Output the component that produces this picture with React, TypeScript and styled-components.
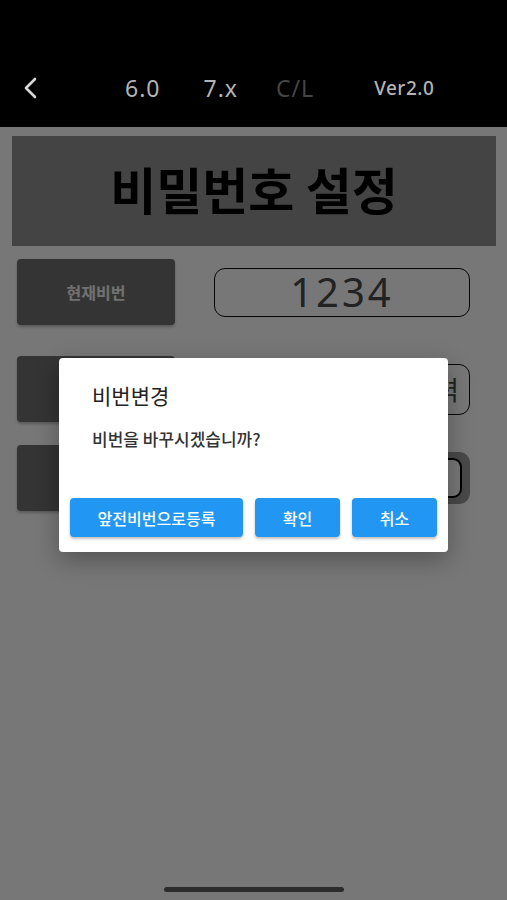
import React from "react";
import styled, { createGlobalStyle } from "styled-components";

const GlobalStyle = createGlobalStyle`
  html, body {
    margin: 0;
    padding: 0;
    background: #000;
  }
  * {
    box-sizing: border-box;
  }
`;

const FONT = `"Noto Sans", "Noto Sans CJK KR", sans-serif`;

const Screen = styled.div`
  position: relative;
  width: 507px;
  height: 900px;
  overflow: hidden;
  background-color: #ffffff;
  font-family: ${FONT};
  display: flex;
  flex-direction: column;
`;

const Header = styled.div`
  height: 127px;
  flex-shrink: 0;
  background-color: #000;
  display: flex;
  align-items: center;
  padding: 49px 0 0 22px;
`;

const BackButton = styled.div`
  width: 18px;
  height: 22px;
  display: flex;
  align-items: center;
`;

type TabProps = {
  $dim?: boolean;
  $small?: boolean;
  $gap: number;
};

const Tab = styled.span<TabProps>`
  font-size: ${({ $small }) => ($small ? 19 : 23)}px;
  font-weight: ${({ $small }) => ($small ? 500 : 400)};
  letter-spacing: ${({ $small }) => ($small ? 0.5 : 1)}px;
  color: ${({ $dim }) => ($dim ? "#454545" : "#b4b4b4")};
  margin-left: ${({ $gap }) => $gap}px;
  line-height: 1;
`;

const Body = styled.div`
  flex: 1;
  padding: 9px 11px 0 12px;
  display: flex;
  flex-direction: column;
`;

const TitleBox = styled.div`
  height: 110px;
  background-color: #929292;
  display: flex;
  align-items: center;
  justify-content: center;
`;

const Title = styled.h1`
  margin: 0 0 6px 0;
  font-family: "Noto Sans CJK KR", sans-serif;
  font-size: 50px;
  font-weight: 700;
  line-height: 1;
  color: #000;
`;

type RowProps = {
  $top: number;
};

const Row = styled.div<RowProps>`
  display: flex;
  align-items: center;
  margin-top: ${({ $top }) => $top}px;
  padding-left: 5px;
`;

const LabelButton = styled.div`
  width: 158px;
  height: 66px;
  border-radius: 4px;
  background-color: #717171;
  box-shadow: 0 2px 3px rgba(0, 0, 0, 0.25);
  display: flex;
  align-items: center;
  justify-content: center;
  color: #f2f2f2;
  font-family: "Noto Sans CJK KR", sans-serif;
  font-size: 16px;
  font-weight: 700;
`;

type FieldProps = {
  $height: number;
  $align?: string;
};

const Field = styled.div<FieldProps>`
  margin-left: 39px;
  width: 256px;
  height: ${({ $height }) => $height}px;
  border: 1.5px solid #111;
  border-radius: 11px;
  display: flex;
  align-items: center;
  justify-content: ${({ $align }) => $align || "center"};
  padding: 0 10px;
  color: #4a4a4a;
  font-size: 40px;
  line-height: 1;
  letter-spacing: 3px;
`;

const FieldHint = styled.span`
  font-family: "Noto Sans CJK KR", sans-serif;
  font-size: 26px;
  letter-spacing: 0;
`;

const FocusBox = styled.div`
  margin-left: 39px;
  width: 256px;
  height: 52px;
  border-radius: 11px;
  background-color: #9c9c9c;
  padding: 6px 8px;
  display: flex;
`;

const FocusInner = styled.div`
  flex: 1;
  border: 2.5px solid #000;
  border-radius: 9px;
  background-color: #ffffff;
`;

const Backdrop = styled.div`
  position: absolute;
  top: 127px;
  left: 0;
  right: 0;
  bottom: 0;
  background-color: rgba(0, 0, 0, 0.533);
  display: flex;
  justify-content: center;
  align-items: flex-start;
  padding-top: 231px;
`;

const Dialog = styled.div`
  width: 389px;
  height: 194px;
  background-color: #fff;
  border-radius: 4px;
  box-shadow: 0 8px 24px rgba(0, 0, 0, 0.3);
  padding: 22px 11px 15px 11px;
  display: flex;
  flex-direction: column;
`;

const DialogTitle = styled.div`
  padding-left: 22px;
  font-family: "Noto Sans CJK KR", sans-serif;
  font-size: 21px;
  color: #222;
  line-height: 30px;
`;

const DialogMessage = styled.div`
  padding-left: 22px;
  margin-top: 17px;
  font-family: "Noto Sans CJK KR", sans-serif;
  font-size: 17px;
  font-weight: 500;
  color: #333;
  line-height: 24px;
`;

const Actions = styled.div`
  margin-top: auto;
  display: flex;
  gap: 12px;
`;

type ActionProps = {
  $width: number;
};

const ActionButton = styled.button<ActionProps>`
  width: ${({ $width }) => $width}px;
  height: 39px;
  border: 0;
  border-radius: 4px;
  background-color: #2196f3;
  box-shadow: 0 2px 3px rgba(0, 0, 0, 0.25);
  color: #fff;
  font-family: "Noto Sans CJK KR", sans-serif;
  font-size: 16px;
  font-weight: 500;
  cursor: pointer;
  padding: 0;
`;

const HomeIndicator = styled.div`
  position: absolute;
  left: 164px;
  bottom: 8px;
  width: 180px;
  height: 5px;
  border-radius: 3px;
  background-color: #2c2c2c;
`;

const App = () => {
  return (
    <>
      <GlobalStyle />
      <Screen>
        <Header>
          <BackButton>
            <svg width="18" height="22" viewBox="0 0 18 22">
              <path
                d="M13 2 L4 11 L13 20"
                fill="none"
                stroke="#d8d8d8"
                strokeWidth="2.6"
                strokeLinecap="round"
                strokeLinejoin="round"
              />
            </svg>
          </BackButton>
          <Tab $gap={85}>6.0</Tab>
          <Tab $gap={43}>7.x</Tab>
          <Tab $gap={38} $dim>
            C/L
          </Tab>
          <Tab $gap={60} $small>
            Ver2.0
          </Tab>
        </Header>
        <Body>
          <TitleBox>
            <Title>비밀번호 설정</Title>
          </TitleBox>
          <Row $top={13}>
            <LabelButton>현재비번</LabelButton>
            <Field $height={49}>1234</Field>
          </Row>
          <Row $top={31}>
            <LabelButton>새비번</LabelButton>
            <Field $height={51} $align="flex-end">
              <FieldHint>새비번입력</FieldHint>
            </Field>
          </Row>
          <Row $top={23}>
            <LabelButton>비번확인</LabelButton>
            <FocusBox>
              <FocusInner />
            </FocusBox>
          </Row>
        </Body>
        <Backdrop>
          <Dialog>
            <DialogTitle>비번변경</DialogTitle>
            <DialogMessage>비번을 바꾸시겠습니까?</DialogMessage>
            <Actions>
              <ActionButton $width={173}>앞전비번으로등록</ActionButton>
              <ActionButton $width={85}>확인</ActionButton>
              <ActionButton $width={85}>취소</ActionButton>
            </Actions>
          </Dialog>
        </Backdrop>
        <HomeIndicator />
      </Screen>
    </>
  );
};

export default App;
